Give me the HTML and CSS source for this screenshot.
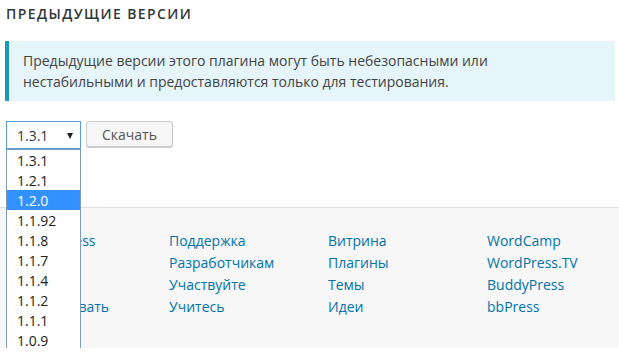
FILE: index.html
```html
<!DOCTYPE html>
<html lang="ru">
<head>
<meta charset="utf-8">
<link rel="stylesheet" href="styles.css">
</head>
<body>
<section class="versions">
  <h3 class="heading">Предыдущие версии</h3>
  <div class="notice">
    <p>Предыдущие версии этого плагина могут быть небезопасными или нестабильными и предоставляются только для тестирования.</p>
  </div>
  <div class="controls">
    <div class="select-wrap">
      <div class="select"><span>1.3.1</span><span class="arrow"></span></div>
      <ul class="dropdown">
        <li>1.3.1</li>
        <li>1.2.1</li>
        <li class="active">1.2.0</li>
        <li>1.1.92</li>
        <li>1.1.8</li>
        <li>1.1.7</li>
        <li>1.1.4</li>
        <li>1.1.2</li>
        <li>1.1.1</li>
        <li>1.0.9</li>
      </ul>
    </div>
    <button class="button">Скачать</button>
  </div>
</section>
<footer class="footer">
  <ul class="col">
    <li><a href="#">О WordPress</a></li>
    <li><a href="#">Блог</a></li>
    <li><a href="#">Хостинг</a></li>
    <li><a href="#">Пожертвовать</a></li>
  </ul>
  <ul class="col">
    <li><a href="#">Поддержка</a></li>
    <li><a href="#">Разработчикам</a></li>
    <li><a href="#">Участвуйте</a></li>
    <li><a href="#">Учитесь</a></li>
  </ul>
  <ul class="col">
    <li><a href="#">Витрина</a></li>
    <li><a href="#">Плагины</a></li>
    <li><a href="#">Темы</a></li>
    <li><a href="#">Идеи</a></li>
  </ul>
  <ul class="col">
    <li><a href="#">WordCamp</a></li>
    <li><a href="#">WordPress.TV</a></li>
    <li><a href="#">BuddyPress</a></li>
    <li><a href="#">bbPress</a></li>
  </ul>
</footer>
</body>
</html>
```

FILE: styles.css
```css
* { box-sizing: border-box; }
html, body {
  margin: 0;
  padding: 0;
  background: #fff;
  font-family: "Open Sans", "Noto Sans", sans-serif;
  font-size: 14px;
  color: #32373c;
  overflow: hidden;
}
.versions {
  padding: 0 4px 0 5px;
}
.heading {
  margin: 4px 0 0 1px;
  font-size: 14px;
  line-height: 20px;
  font-weight: 600;
  text-transform: uppercase;
  letter-spacing: 1.4px;
  color: #32373c;
}
.notice {
  margin-top: 17px;
  height: 60px;
  background: #e5f5fa;
  border-left: 4px solid #1899b5;
  padding: 9px 14px;
}
.notice p {
  margin: 0;
  line-height: 21px;
  color: #444;
}
.controls {
  margin-top: 20px;
  margin-left: 1px;
  display: flex;
  align-items: flex-start;
  gap: 5px;
}
.select-wrap {
  position: relative;
  width: 75px;
}
.select {
  height: 28px;
  border: 1px solid #5b9dd9;
  background: #fff;
  display: flex;
  align-items: center;
  justify-content: space-between;
  padding: 0 7px 0 10px;
  color: #32373c;
}
.arrow {
  width: 0;
  height: 0;
  border-left: 3px solid transparent;
  border-right: 3px solid transparent;
  border-top: 6px solid #222;
  margin-top: 1px;
}
.dropdown {
  position: absolute;
  left: 0;
  top: 28px;
  width: 75px;
  margin: 0;
  padding: 0;
  list-style: none;
  background: #fff;
  border: 1px solid #7f9db9;
  z-index: 2;
}
.dropdown li {
  height: 20px;
  line-height: 22px;
  padding-left: 10px;
  color: #222;
}
.dropdown li.active {
  background: #3390ff;
  color: #fff;
}
.button {
  width: 87px;
  height: 26px;
  border: 1px solid #ccc;
  border-radius: 3px;
  background: #f7f7f7;
  box-shadow: 0 1px 0 #ccc;
  font-family: "Open Sans", "Noto Sans", sans-serif;
  font-size: 14px;
  color: #555;
  padding: 0;
}
.footer {
  margin-top: 58px;
  border-top: 1px solid #dedede;
  background: #f7f7f7;
  padding: 22px 0 30px 10px;
  display: grid;
  grid-template-columns: repeat(4, 159px);
}
.col {
  list-style: none;
  margin: 0;
  padding: 0;
}
.col li {
  line-height: 22px;
}
.col a {
  color: #0073aa;
  text-decoration: none;
}
```
